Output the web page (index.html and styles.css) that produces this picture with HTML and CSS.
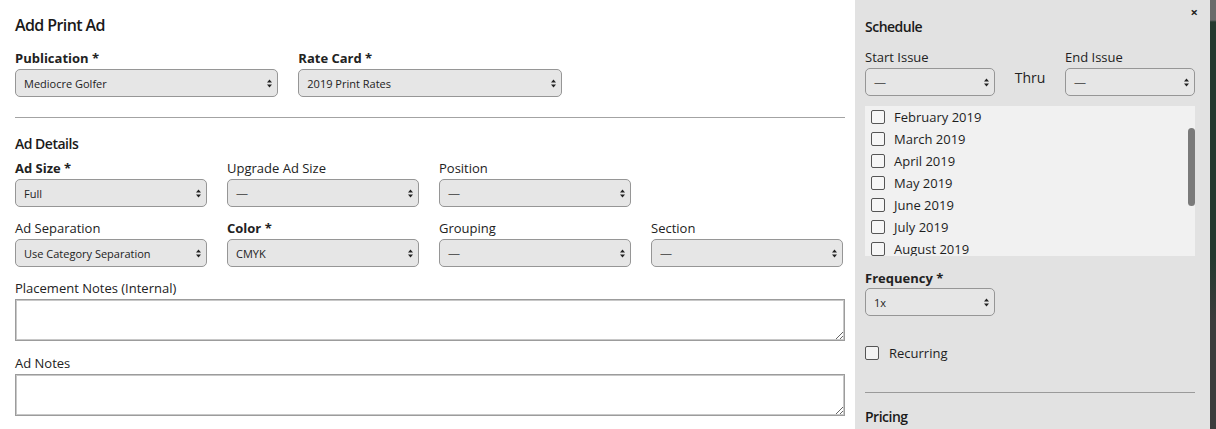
FILE: index.html
```html
<!DOCTYPE html>
<html lang="en">
<head>
<meta charset="utf-8">
<title>Add Print Ad</title>
<link rel="stylesheet" href="styles.css">
</head>
<body>
<div class="modal">
  <main class="main">
    <h1 class="title">Add Print Ad</h1>
    <div class="grid3">
      <div class="field">
        <label class="lbl req">Publication *</label>
        <div class="sel"><span class="val">Mediocre Golfer</span><svg class="arr" width="5" height="9" viewBox="0 0 5 9"><path d="M0 3.5 L2.5 0.5 L5 3.5Z M0 5.5 L2.5 8.5 L5 5.5Z"/></svg></div>
      </div>
      <div class="field">
        <label class="lbl req">Rate Card *</label>
        <div class="sel"><span class="val">2019 Print Rates</span><svg class="arr" width="5" height="9" viewBox="0 0 5 9"><path d="M0 3.5 L2.5 0.5 L5 3.5Z M0 5.5 L2.5 8.5 L5 5.5Z"/></svg></div>
      </div>
    </div>
    <hr class="rule">
    <h2 class="sub">Ad Details</h2>
    <div class="grid4">
      <div class="field">
        <label class="lbl req">Ad Size *</label>
        <div class="sel"><span class="val">Full</span><svg class="arr" width="5" height="9" viewBox="0 0 5 9"><path d="M0 3.5 L2.5 0.5 L5 3.5Z M0 5.5 L2.5 8.5 L5 5.5Z"/></svg></div>
      </div>
      <div class="field">
        <label class="lbl">Upgrade Ad Size</label>
        <div class="sel"><span class="val dash">—</span><svg class="arr" width="5" height="9" viewBox="0 0 5 9"><path d="M0 3.5 L2.5 0.5 L5 3.5Z M0 5.5 L2.5 8.5 L5 5.5Z"/></svg></div>
      </div>
      <div class="field">
        <label class="lbl">Position</label>
        <div class="sel"><span class="val dash">—</span><svg class="arr" width="5" height="9" viewBox="0 0 5 9"><path d="M0 3.5 L2.5 0.5 L5 3.5Z M0 5.5 L2.5 8.5 L5 5.5Z"/></svg></div>
      </div>
      <div></div>
      <div class="field">
        <label class="lbl">Ad Separation</label>
        <div class="sel"><span class="val">Use Category Separation</span><svg class="arr" width="5" height="9" viewBox="0 0 5 9"><path d="M0 3.5 L2.5 0.5 L5 3.5Z M0 5.5 L2.5 8.5 L5 5.5Z"/></svg></div>
      </div>
      <div class="field">
        <label class="lbl req">Color *</label>
        <div class="sel"><span class="val">CMYK</span><svg class="arr" width="5" height="9" viewBox="0 0 5 9"><path d="M0 3.5 L2.5 0.5 L5 3.5Z M0 5.5 L2.5 8.5 L5 5.5Z"/></svg></div>
      </div>
      <div class="field">
        <label class="lbl">Grouping</label>
        <div class="sel"><span class="val dash">—</span><svg class="arr" width="5" height="9" viewBox="0 0 5 9"><path d="M0 3.5 L2.5 0.5 L5 3.5Z M0 5.5 L2.5 8.5 L5 5.5Z"/></svg></div>
      </div>
      <div class="field">
        <label class="lbl">Section</label>
        <div class="sel"><span class="val dash">—</span><svg class="arr" width="5" height="9" viewBox="0 0 5 9"><path d="M0 3.5 L2.5 0.5 L5 3.5Z M0 5.5 L2.5 8.5 L5 5.5Z"/></svg></div>
      </div>
    </div>
    <div class="field wide">
      <label class="lbl">Placement Notes (Internal)</label>
      <textarea class="ta"></textarea>
    </div>
    <div class="field wide">
      <label class="lbl">Ad Notes</label>
      <textarea class="ta"></textarea>
    </div>
  </main>
  <aside class="panel">
    <span class="close">×</span>
    <h2 class="sub sched">Schedule</h2>
    <div class="issues">
      <div class="field">
        <label class="lbl">Start Issue</label>
        <div class="sel"><span class="val dash">—</span><svg class="arr" width="5" height="9" viewBox="0 0 5 9"><path d="M0 3.5 L2.5 0.5 L5 3.5Z M0 5.5 L2.5 8.5 L5 5.5Z"/></svg></div>
      </div>
      <div class="thru">Thru</div>
      <div class="field">
        <label class="lbl">End Issue</label>
        <div class="sel"><span class="val dash">—</span><svg class="arr" width="5" height="9" viewBox="0 0 5 9"><path d="M0 3.5 L2.5 0.5 L5 3.5Z M0 5.5 L2.5 8.5 L5 5.5Z"/></svg></div>
      </div>
    </div>
    <div class="list">
      <ul class="items">
        <li class="item"><span class="cb"></span>February 2019</li>
        <li class="item"><span class="cb"></span>March 2019</li>
        <li class="item"><span class="cb"></span>April 2019</li>
        <li class="item"><span class="cb"></span>May 2019</li>
        <li class="item"><span class="cb"></span>June 2019</li>
        <li class="item"><span class="cb"></span>July 2019</li>
        <li class="item"><span class="cb"></span>August 2019</li>
      </ul>
      <span class="thumb"></span>
    </div>
    <div class="field freq">
      <label class="lbl req">Frequency *</label>
      <div class="sel"><span class="val">1x</span><svg class="arr" width="5" height="9" viewBox="0 0 5 9"><path d="M0 3.5 L2.5 0.5 L5 3.5Z M0 5.5 L2.5 8.5 L5 5.5Z"/></svg></div>
    </div>
    <div class="recur"><span class="cb"></span>Recurring</div>
    <hr class="rule prule">
    <h2 class="sub pricing">Pricing</h2>
  </aside>
  <div class="edge"></div>
</div>
</body>
</html>
```

FILE: styles.css
```css
* { box-sizing: border-box; }
html, body { margin: 0; padding: 0; }
body {
  font-family: "Open Sans", "Liberation Sans", sans-serif;
  color: #1e1e1e;
  background: #fff;
}
.modal {
  display: flex;
  height: 429px;
  overflow: hidden;
}
.main {
  width: 855px;
  flex: none;
  padding: 14px 10px 0 15px;
  background: #fff;
}
.title {
  margin: 0 0 13px;
  font-size: 16px;
  line-height: 22px;
  font-weight: 600;
  letter-spacing: -0.6px;
  color: #1a1a1a;
}
.sub {
  margin: 0;
  font-size: 14px;
  line-height: 20px;
  font-weight: 600;
  letter-spacing: -0.5px;
  color: #1a1a1a;
}
.field { display: flex; flex-direction: column; }
.lbl {
  font-size: 13px;
  line-height: 18px;
  margin-bottom: 2px;
  color: #222;
}
.lbl.req { font-weight: 700; }
.grid3 {
  display: grid;
  grid-template-columns: repeat(3, 1fr);
  column-gap: 20px;
}
.grid4 {
  display: grid;
  grid-template-columns: repeat(4, 192px);
  column-gap: 20px;
  row-gap: 12px;
  margin-top: 5px;
}
.sel {
  position: relative;
  height: 28px;
  border: 1px solid #969696;
  border-radius: 5px;
  background: #e6e6e6;
  display: flex;
  align-items: center;
  padding: 0 8px;
  font-size: 11px;
  color: #222;
}
.val { white-space: nowrap; }
.val.dash { color: #5a5a5a; font-size: 12px; }
.arr {
  position: absolute;
  right: 5px;
  top: 9px;
  fill: #222;
}
.rule {
  border: 0;
  border-top: 1px solid #a3a3a3;
  margin: 20px 0 16px;
  height: 0;
}
.wide { margin-top: 12px; }
.ta {
  width: 830px;
  height: 42px;
  border: 1px solid #9c9c9c;
  box-shadow: inset 0 0 0 1px #c8c8c8;
  border-radius: 0;
  background: #fff;
  resize: vertical;
  font-family: inherit;
  display: block;
}
.wide + .wide { margin-top: 13px; }

.panel {
  position: relative;
  width: 355px;
  flex: none;
  background: #e2e2e2;
  padding: 17px 15px 0 10px;
}
.close {
  position: absolute;
  right: 12px;
  top: 3px;
  font-size: 13px;
  font-weight: 700;
  line-height: 18px;
  color: #222;
}
.issues {
  display: grid;
  grid-template-columns: 130px 1fr 130px;
  margin-top: 11px;
}
.thru {
  font-size: 14px;
  line-height: 20px;
  text-align: center;
  padding-top: 20px;
  color: #222;
}
.list {
  position: relative;
  margin-top: 10px;
  height: 150px;
  background: #f1f1f1;
  overflow: hidden;
}
.items {
  list-style: none;
  margin: 0;
  padding: 0 0 0 6px;
}
.item {
  display: flex;
  align-items: center;
  height: 22px;
  font-size: 13px;
  color: #1e1e1e;
}
.cb {
  width: 14px;
  height: 14px;
  border: 1px solid #555;
  border-radius: 2px;
  background: #f6f6f6;
  margin-right: 9px;
  flex: none;
}
.thumb {
  position: absolute;
  right: 0;
  top: 22px;
  width: 7px;
  height: 78px;
  border-radius: 4px;
  background: #7a7a7a;
}
.freq { margin-top: 13px; width: 130px; }
.freq .lbl { margin-bottom: 1px; }
.recur {
  display: flex;
  align-items: center;
  height: 20px;
  margin-top: 27px;
  font-size: 13px;
  color: #1e1e1e;
}
.recur .cb { margin-right: 10px; background: #f3f3f3; }
.prule { margin: 29px 0 14px; border-top-color: #9a9a9a; }
.edge {
  flex: 1;
  background: linear-gradient(#6a6a6a 0, #6a6a6a 20px, #25392f 22px, #25392f 60%, #3c3c3c 75%, #3c3c3c 100%);
}
```
